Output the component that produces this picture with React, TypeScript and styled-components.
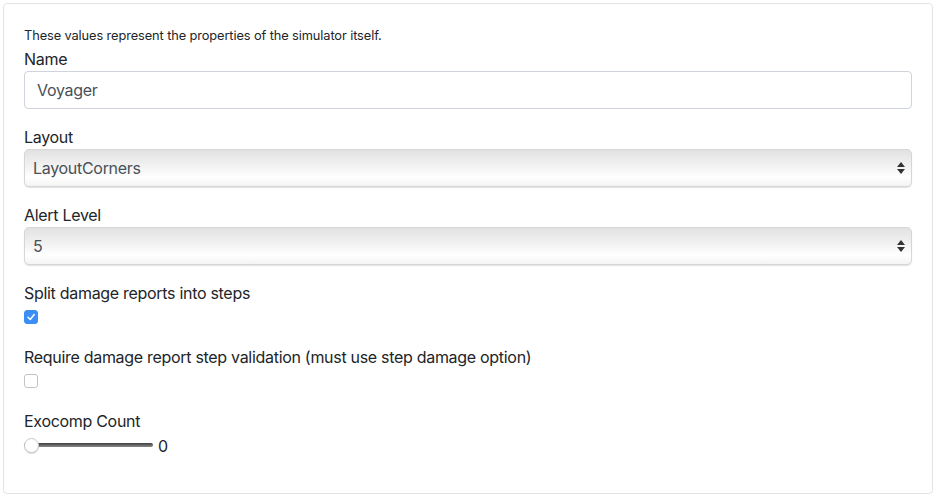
import React from "react";
import styled, { createGlobalStyle } from "styled-components";

const Global = createGlobalStyle`
  html, body { margin: 0; padding: 0; background: #fff; }
  body {
    font-family: Inter, "Noto Sans", sans-serif;
    font-size: 16px;
    line-height: 1.5;
    color: #212529;
    letter-spacing: -0.3px;
  }
  * { box-sizing: border-box; }
`;

const Page = styled.div`
  padding: 3px 4px 3px 3px;
`;

const Card = styled.div`
  width: 930px;
  border: 1px solid #e3e3e3;
  border-radius: 4px;
  padding: 20px 20px 20px;
`;

const Hint = styled.small`
  display: block;
  font-size: 12.8px;
  line-height: 23px;
  letter-spacing: -0.1px;
`;

const Group = styled.div`
  margin-bottom: 16px;
`;

const Label = styled.label`
  display: block;
  line-height: 24px;
`;

const TextInput = styled.input`
  display: block;
  width: 100%;
  height: 38px;
  padding: 6px 12px;
  font: inherit;
  letter-spacing: inherit;
  color: #495057;
  background: #fff;
  border: 1px solid #ced4da;
  border-radius: 4px;
  outline: none;
`;

const SelectWrap = styled.div`
  position: relative;
`;

const Select = styled.select`
  display: block;
  width: 100%;
  height: 38px;
  padding: 0 30px 0 8px;
  font: inherit;
  letter-spacing: inherit;
  color: #495057;
  appearance: none;
  -webkit-appearance: none;
  border: 1px solid #d6d6d6;
  border-radius: 5px;
  background: linear-gradient(#e2e2e2 0%, #f2f2f2 45%, #ffffff 75%, #f4f4f4 100%);
  box-shadow: 0 1px 1px rgba(0, 0, 0, 0.12);
  outline: none;
`;

const Arrows = styled.svg`
  position: absolute;
  right: 6px;
  top: 50%;
  transform: translateY(-50%);
  pointer-events: none;
`;

const CheckRow = styled.div`
  height: 24px;
  display: flex;
  align-items: center;
`;

const Box = styled.span<{ $checked?: boolean }>`
  width: 14px;
  height: 14px;
  border-radius: 3px;
  display: inline-flex;
  align-items: center;
  justify-content: center;
  background: ${(p) => (p.$checked ? "#3b8ef5" : "#fff")};
  border: 1px solid ${(p) => (p.$checked ? "#3b8ef5" : "#c4c4c4")};
`;

const SliderRow = styled.div`
  height: 24px;
  display: flex;
  align-items: center;
  gap: 5px;
`;

const Range = styled.input`
  -webkit-appearance: none;
  appearance: none;
  width: 129px;
  height: 16px;
  margin: 0;
  background: transparent;
  &::-webkit-slider-runnable-track {
    height: 4px;
    border-radius: 2px;
    background: linear-gradient(#3e3e3e, #8a8a8a);
  }
  &::-webkit-slider-thumb {
    -webkit-appearance: none;
    width: 15px;
    height: 15px;
    margin-top: -5.5px;
    border-radius: 50%;
    background: #fff;
    border: 1px solid #c8c8c8;
    box-shadow: 0 1px 1px rgba(0, 0, 0, 0.15);
  }
`;

const Value = styled.span`
  margin-top: 1px;
`;

const Field: React.FC<{ label: string; children: React.ReactNode }> = ({ label, children }) => (
  <Group>
    <Label>{label}</Label>
    {children}
  </Group>
);

const SelectField: React.FC<{ label: string; value: string }> = ({ label, value }) => (
  <Field label={label}>
    <SelectWrap>
      <Select defaultValue={value}>
        <option value={value}>{value}</option>
      </Select>
      <Arrows width="10" height="16" viewBox="0 0 10 16">
        <path d="M5 2 L9 7 L1 7 Z" fill="#333" />
        <path d="M5 14 L9 9 L1 9 Z" fill="#333" />
      </Arrows>
    </SelectWrap>
  </Field>
);

const Check: React.FC<{ label: string; checked?: boolean }> = ({ label, checked }) => (
  <Field label={label}>
    <CheckRow>
      <Box $checked={checked}>
        {checked && (
          <svg width="10" height="10" viewBox="0 0 10 10">
            <path d="M2 5.3 L4.2 7.5 L8.2 2.5" fill="none" stroke="#fff" strokeWidth="1.5" strokeLinecap="round" strokeLinejoin="round" />
          </svg>
        )}
      </Box>
    </CheckRow>
  </Field>
);

export default function App() {
  return (
    <Page>
      <Global />
      <Card>
        <Hint>These values represent the properties of the simulator itself.</Hint>
        <Field label="Name">
          <TextInput defaultValue="Voyager" />
        </Field>
        <SelectField label="Layout" value="LayoutCorners" />
        <SelectField label="Alert Level" value="5" />
        <Check label="Split damage reports into steps" checked />
        <Check label="Require damage report step validation (must use step damage option)" />
        <Field label="Exocomp Count">
          <SliderRow>
            <Range type="range" min={0} max={10} defaultValue={0} />
            <Value>0</Value>
          </SliderRow>
        </Field>
      </Card>
    </Page>
  );
}
